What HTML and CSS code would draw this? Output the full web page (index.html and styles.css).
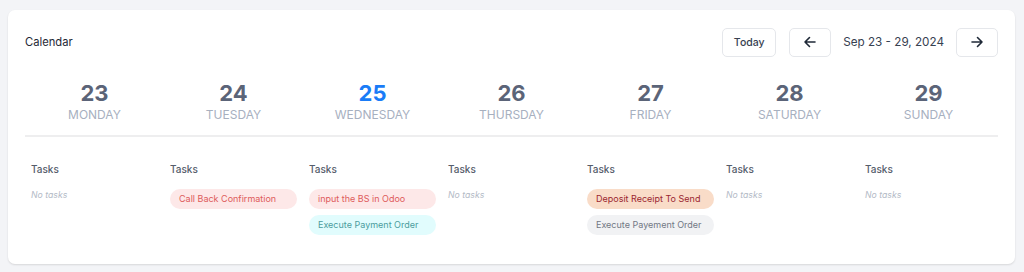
FILE: index.html
```html
<!DOCTYPE html>
<html>
<head>
<meta charset="utf-8">
<link rel="stylesheet" href="styles.css">
</head>
<body>
<div class="card">
  <div class="header">
    <div class="title">Calendar</div>
    <div class="controls">
      <button class="btn today">Today</button>
      <button class="btn icon" aria-label="Previous week">
        <svg width="16" height="16" viewBox="0 0 16 16" fill="none" stroke="#1f2937" stroke-width="1.6" stroke-linecap="round" stroke-linejoin="round"><path d="M13 8H3M7.5 3.5L3 8l4.5 4.5"/></svg>
      </button>
      <span class="range">Sep 23 - 29, 2024</span>
      <button class="btn icon" aria-label="Next week">
        <svg width="16" height="16" viewBox="0 0 16 16" fill="none" stroke="#1f2937" stroke-width="1.6" stroke-linecap="round" stroke-linejoin="round"><path d="M3 8h10M8.5 3.5L13 8l-4.5 4.5"/></svg>
      </button>
    </div>
  </div>
  <div class="days">
    <div class="day"><div class="num">23</div><div class="name">Monday</div></div>
    <div class="day"><div class="num">24</div><div class="name">Tuesday</div></div>
    <div class="day current"><div class="num">25</div><div class="name">Wednesday</div></div>
    <div class="day"><div class="num">26</div><div class="name">Thursday</div></div>
    <div class="day"><div class="num">27</div><div class="name">Friday</div></div>
    <div class="day"><div class="num">28</div><div class="name">Saturday</div></div>
    <div class="day"><div class="num">29</div><div class="name">Sunday</div></div>
  </div>
  <div class="tasks">
    <div class="col"><div class="label">Tasks</div><div class="empty">No tasks</div></div>
    <div class="col"><div class="label">Tasks</div><div class="list"><div class="pill red">Call Back Confirmation</div></div></div>
    <div class="col"><div class="label">Tasks</div><div class="list"><div class="pill red">input the BS in Odoo</div><div class="pill cyan">Execute Payment Order</div></div></div>
    <div class="col"><div class="label">Tasks</div><div class="empty">No tasks</div></div>
    <div class="col"><div class="label">Tasks</div><div class="list"><div class="pill orange">Deposit Receipt To Send</div><div class="pill gray">Execute Payement Order</div></div></div>
    <div class="col"><div class="label">Tasks</div><div class="empty">No tasks</div></div>
    <div class="col"><div class="label">Tasks</div><div class="empty">No tasks</div></div>
  </div>
</div>
</body>
</html>
```

FILE: styles.css
```css
* { box-sizing: border-box; }
html, body { margin: 0; padding: 0; }
body {
  background: #f3f4f7;
  font-family: Inter, "Noto Sans", sans-serif;
  padding: 10px 9px 8px 8px;
}
.card {
  background: #fff;
  border-radius: 7px;
  box-shadow: 0 1px 2px rgba(0,0,0,0.12);
  padding: 18px 17px 29px 17px;
  height: 254px;
}
.header {
  display: flex;
  align-items: center;
  justify-content: space-between;
  height: 28px;
}
.title {
  font-size: 11.2px;
  color: #1f2937;
}
.controls {
  display: flex;
  align-items: center;
}
.btn {
  font-family: inherit;
  background: #fff;
  border: 1px solid #e5e7eb;
  border-radius: 5px;
  height: 29px;
  display: flex;
  align-items: center;
  justify-content: center;
  padding: 0;
  color: #374151;
}
.today {
  width: 54px;
  font-size: 10.5px;
  font-weight: 500;
  margin-right: 13px;
}
.icon { width: 42px; }
.range {
  font-size: 11.7px;
  color: #374151;
  margin: 0 12px;
}
.days {
  display: grid;
  grid-template-columns: repeat(7, minmax(0, 1fr));
  margin-top: 24px;
  padding-bottom: 12px;
  border-bottom: 2px solid #eeeeef;
}
.day { text-align: center; }
.num {
  font-size: 22px;
  font-weight: 700;
  line-height: 26px;
  color: #5b6478;
}
.current .num { color: #1a7cf7; }
.name {
  font-size: 12px;
  line-height: 17px;
  text-transform: uppercase;
  color: #a7b0bf;
}
.tasks {
  display: grid;
  grid-template-columns: repeat(7, minmax(0, 1fr));
  margin-top: 25px;
}
.col { padding: 0 6px; }
.label {
  font-size: 10px;
  font-weight: 500;
  line-height: 15px;
  color: #555d6b;
}
.empty {
  font-size: 8.7px;
  font-style: italic;
  color: #b3bac6;
  margin-top: 12px;
  line-height: 12px;
}
.list {
  display: flex;
  flex-direction: column;
  gap: 6px;
  margin-top: 12px;
}
.pill {
  height: 20px;
  border-radius: 10px;
  font-size: 9px;
  line-height: 20px;
  padding: 0 9px;
  white-space: nowrap;
}
.red { background: #fde8e8; color: #de5b5b; }
.cyan { background: #e1fcfd; color: #4c9c9e; }
.orange { background: #f9dcc8; color: #9b2630; }
.gray { background: #f1f2f4; color: #727884; }
```
